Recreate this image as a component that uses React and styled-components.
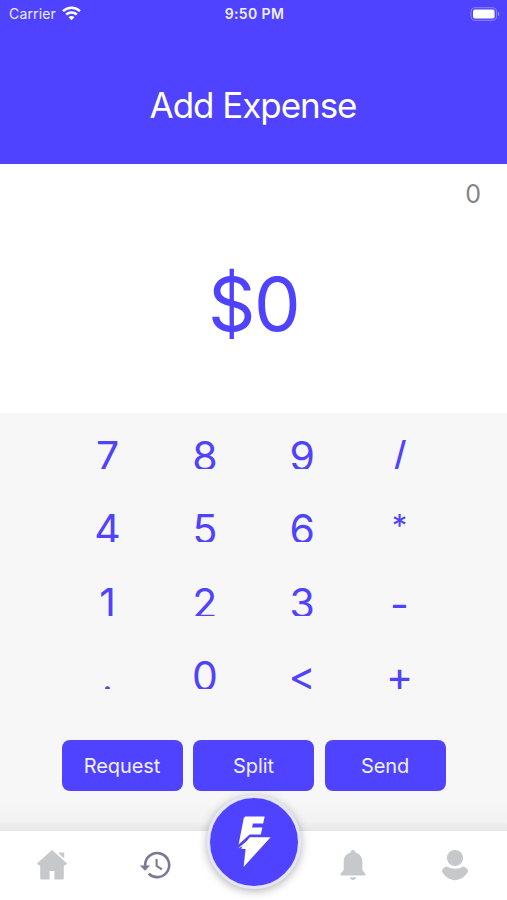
import React, { useState } from 'react';
import styled, { createGlobalStyle } from 'styled-components';

const GlobalStyle = createGlobalStyle`
* {
  box-sizing: border-box;
}
body {
  margin: 0;
  background: #fff;
  font-family: Inter, "Liberation Sans", sans-serif;
}
button {
  border: 0;
  padding: 0;
  background: none;
  font-family: inherit;
  cursor: pointer;
}
svg {
  display: block;
}
`;

const Screen = styled.div`
display: flex;
flex-direction: column;
width: 507px;
height: 900px;
overflow: hidden;
`;

const Header = styled.header`
height: 164px;
background: #4f43ff;
color: #fff;
`;

const StatusBar = styled.div`
display: grid;
grid-template-columns: 1fr auto 1fr;
align-items: center;
height: 27px;
padding: 0 7px 0 9px;
font-size: 14px;
color: #efeeff;
`;

const Carrier = styled.div`
display: flex;
align-items: center;
gap: 6px;
letter-spacing: 0.15px;
`;

const Clock = styled.div`
font-size: 14px;
font-weight: 600;
letter-spacing: 0.4px;
`;

const Battery = styled.div`
justify-self: end;
`;

const Title = styled.h1`
margin: 56px 0 0;
padding-right: 1px;
text-align: center;
font-size: 35px;
line-height: 44px;
font-weight: 400;
letter-spacing: -1.05px;
`;

const Display = styled.section`
height: 249px;
background: #fff;
`;

const Total = styled.div`
padding: 15px 26px 0 0;
text-align: right;
font-size: 25px;
line-height: 30px;
color: #858585;
`;

const Amount = styled.div`
margin-top: 51px;
text-align: center;
font-size: 74px;
line-height: 88px;
letter-spacing: -1.5px;
color: #4f43ff;
`;

const Pad = styled.main`
display: flex;
flex-direction: column;
align-items: center;
height: 418px;
padding-top: 18px;
background: linear-gradient(#f7f7f7 0, #f7f7f7 388px, #f2f2f2 408px, #e6e6e6 418px);
`;

const Keys = styled.div`
display: grid;
grid-template-columns: repeat(4, 97.3px);
grid-template-rows: repeat(4, 73.4px);
`;

const Key = styled.button`
height: 38px;
overflow: hidden;
font-size: ${(props) => props.$size || 41}px;
line-height: ${(props) => props.$line || 50}px;
color: #4f43ff;
`;

const KeyLabel = styled.span`
display: block;
height: 38px;
`;

const Actions = styled.div`
display: flex;
gap: 10.5px;
margin-top: 15px;
`;

const ActionButton = styled.button`
width: 121px;
height: 51px;
padding-top: 1px;
border-radius: 8px;
background: #4f43ff;
color: #f1f0ff;
font-size: 20px;
letter-spacing: -0.1px;
`;

const TabBar = styled.nav`
position: relative;
display: grid;
grid-template-columns: 104px 101px 96px 103px 101px;
justify-items: center;
height: 69px;
padding-top: 18px;
background: #fff;
`;

const Tab = styled.button`
height: 32px;
color: ${(props) => props.$active ? "#7d7991" : "#c5c9cb"};
`;

// sits half above the tab bar
const BoltButton = styled.button`
position: absolute;
left: 207px;
top: -36px;
display: flex;
align-items: center;
justify-content: center;
width: 94px;
height: 94px;
border: 3px solid #e4e5fb;
border-radius: 50%;
background: #4f43ff;
box-shadow: 0 2px 10px rgba(0, 0, 0, 0.3);
`;

const keys = [
  { label: '7' }, { label: '8' }, { label: '9' }, { label: '/' },
  { label: '4' }, { label: '5' }, { label: '6' }, { label: '*', size: 31, line: 43 },
  { label: '1' }, { label: '2' }, { label: '3' }, { label: '-', line: 52 },
  { label: '.', size: 36, line: 55 }, { label: '0' }, { label: '<' }, { label: '+' },
];

const WifiIcon = () => (
  <svg width="19" height="15" viewBox="0 0 19 15" fill="none" stroke="#fff" strokeWidth="2.5">
    <path d="M1 5.2C5.8 .6 13.2 .6 18 5.2" />
    <path d="M4.2 8.5c3-2.8 7.6-2.8 10.6 0" />
    <path d="M9.5 14.2 6.5 11.2c1.7-1.5 4.3-1.5 6 0Z" fill="#fff" stroke="none" />
  </svg>
);

const BatteryIcon = () => (
  <svg width="30" height="14" viewBox="0 0 30 14">
    <rect x="1" y=".7" width="25.6" height="12.6" rx="3.8" fill="none" stroke="#8d84ff" />
    <rect x="3" y="2.6" width="21.6" height="8.8" rx="2" fill="#fff" />
    <path d="M28 4.8c1.6.6 1.6 3.8 0 4.4Z" fill="#a49dff" />
  </svg>
);

const HomeIcon = () => (
  <svg width="32" height="32" viewBox="0 0 32 32" fill="currentColor">
    <path d="M16 1 31 14.4 29.8 16.3H27.8V29.6a1 1 0 0 1-1 1H18.4V22H13.6v8.6H5.2a1 1 0 0 1-1-1V16.3H2.2L1 14.4Z" />
    <path d="M22.6 3.4h5.6v5.9L22.6 4.4Z" />
  </svg>
);

const HistoryIcon = () => (
  <svg width="32" height="32" viewBox="0 0 32 32" fill="none" stroke="currentColor">
    <path d="M6.2 17A12 12 0 1 1 9.8 24.7" strokeWidth="2.6" />
    <path d="M.8 16.4h10.4L6 21.8Z" fill="currentColor" stroke="none" />
    <path d="M17.6 10v7l5.4 3.4" strokeWidth="2.1" />
  </svg>
);

const BellIcon = () => (
  <svg width="26" height="32" viewBox="0 0 26 32" fill="currentColor">
    <path d="M13 1c1.5 0 2.4 1 2.2 2.4 4.4 1.1 7.1 4.6 7.1 9.1V21l2.9 3.6c.7 1 .3 1.9-.7 1.9H1.5c-1 0-1.4-.9-.7-1.9L3.7 21v-8.5c0-4.5 2.7-8 7.1-9.1C10.6 2 11.5 1 13 1Z" />
    <path d="M9.8 28.2h6.4c-.6 1.8-1.6 2.7-3.2 2.7s-2.6-.9-3.2-2.7Z" />
  </svg>
);

const UserIcon = () => (
  <svg width="28" height="32" viewBox="0 0 28 32" fill="currentColor">
    <circle cx="14" cy="9" r="8.1" />
    <path d="M6 17.5c4.6 3 11.4 3 16 0 1.8-.3 4.8 2.2 5.2 5.1C23.8 28 19 31.3 14 31.3S4.2 28 .8 22.6C1.2 19.7 4.2 17.2 6 17.5Z" />
  </svg>
);

const BoltIcon = () => (
  <svg width="88" height="88" viewBox="0 0 88 88" fill="#fff">
    <path d="M35.3 18.5H54.7L53.1 25.5H43L42 29.5H52.4L50.8 36.6H39.6L28.6 46.6 33.8 20Z" />
    <path d="M39.8 39.3H60.6L33.6 69 35.6 51 31 50.7Z" />
    <path d="M28 50.6 39 41.2 36 50.8 32 48.6Z" />
  </svg>
);

function App() {
  const [entry, setEntry] = useState("0");

  const pressKey = (key) => {
    if(key === '<'){
      setEntry(entry.length > 1 ? entry.slice(0, -1) : "0");
      return;
    }
    setEntry(entry === "0" ? key : entry + key);
  }

  return (
    <>
      <GlobalStyle />
      <Screen>
        <Header>
          <StatusBar>
            <Carrier>Carrier <WifiIcon /></Carrier>
            <Clock>9:50 PM</Clock>
            <Battery><BatteryIcon /></Battery>
          </StatusBar>
          <Title>Add Expense</Title>
        </Header>
        <Display>
          <Total>{entry}</Total>
          <Amount>${entry}</Amount>
        </Display>
        <Pad>
          <Keys>
            {keys.map((key) => (
              <Key key={key.label} $size={key.size} $line={key.line} onClick={() => pressKey(key.label)}>
                <KeyLabel>{key.label}</KeyLabel>
              </Key>
            ))}
          </Keys>
          <Actions>
            <ActionButton>Request</ActionButton>
            <ActionButton>Split</ActionButton>
            <ActionButton>Send</ActionButton>
          </Actions>
        </Pad>
        <TabBar>
          <Tab><HomeIcon /></Tab>
          <Tab $active><HistoryIcon /></Tab>
          <span />
          <Tab><BellIcon /></Tab>
          <Tab><UserIcon /></Tab>
          <BoltButton><BoltIcon /></BoltButton>
        </TabBar>
      </Screen>
    </>
  )
}

export default App
